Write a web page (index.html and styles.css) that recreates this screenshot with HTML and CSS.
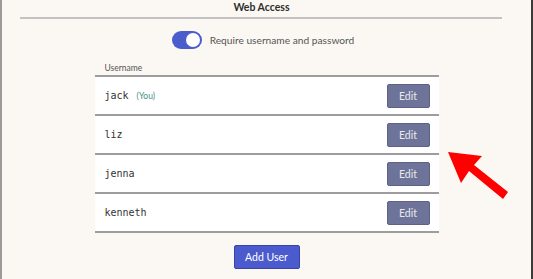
FILE: index.html
```html
<!DOCTYPE html>
<html>
<head>
    <link rel="stylesheet" href="styles.css">
</head>
<body>
    <div class="page">
        <div class="title">Web Access</div>
        <div class="rule"></div>

        <label class="require">
            <span class="toggle"><span class="knob"></span></span>
            <span class="require-text">Require username and password</span>
        </label>

        <div class="users">
            <div class="users-head">Username</div>
            <div class="user-row">
                <span class="name">jack <span class="you">(You)</span></span>
                <button class="edit">Edit</button>
            </div>
            <div class="user-row">
                <span class="name">liz</span>
                <button class="edit">Edit</button>
            </div>
            <div class="user-row">
                <span class="name">jenna</span>
                <button class="edit">Edit</button>
            </div>
            <div class="user-row">
                <span class="name">kenneth</span>
                <button class="edit">Edit</button>
            </div>
        </div>

        <button class="add-user">Add User</button>

        <svg class="arrow" width="70" height="60" viewBox="0 0 70 60">
            <polygon points="0,0 34,4 26,13 60,40 55,47 21,19 13,31" fill="#ff0000"/>
        </svg>
    </div>
</body>
</html>
```

FILE: styles.css
```css
body {
    margin: 0;
    font-family: 'Lato', 'Open Sans', sans-serif;
    background: #fbf8f3;
    overflow: hidden;
}

.page {
    position: relative;
    box-sizing: border-box;
    width: 533px;
    height: 279px;
    border-left: 2px solid #9b9b9b;
    border-right: 2px solid #3b3b3b;
    background: #fbf8f3;
    display: flex;
    flex-direction: column;
    align-items: center;
}

.title {
    margin: 1px 10px 0 0;
    font-size: 10.5px;
    font-weight: bold;
    line-height: 13px;
    color: #2e2e2e;
}

.rule {
    align-self: stretch;
    height: 2px;
    margin: 3px 29px 0 18px;
    background: #c2c2c2;
}

.require {
    display: flex;
    align-items: center;
    gap: 8px;
    margin-top: 12px;
    margin-right: 7px;
}

.toggle {
    display: flex;
    align-items: center;
    justify-content: flex-end;
    box-sizing: border-box;
    width: 30px;
    height: 18px;
    padding: 2px;
    border-radius: 9px;
    background: #4b5ccd;
}

.knob {
    width: 14px;
    height: 14px;
    border-radius: 50%;
    background: #fff;
}

.require-text {
    font-size: 10.2px;
    color: #555;
}

.users {
    width: 344px;
    margin-top: 14px;
}

.users-head {
    padding: 0 0 1px 10px;
    font-size: 8.5px;
    line-height: 11px;
    color: #555;
}

.user-row {
    display: flex;
    align-items: center;
    justify-content: space-between;
    height: 37px;
    padding: 0 9px 0 10px;
    background: #fff;
    border-top: 2px solid #9d9d9d;
}

.user-row:last-child {
    border-bottom: 2px solid #9d9d9d;
}

.name {
    font-family: 'DejaVu Sans Mono', monospace;
    font-size: 10px;
    color: #333;
}

.you {
    font-family: 'Lato', sans-serif;
    font-size: 8.5px;
    color: #3f8f80;
    margin-left: 2px;
}

.edit {
    width: 43px;
    height: 24px;
    border: 1px solid #5d6286;
    border-radius: 2px;
    background: #6e7499;
    color: #e8e9f0;
    font-family: 'Lato', sans-serif;
    font-size: 10.5px;
    padding: 0;
}

.add-user {
    width: 66px;
    height: 24px;
    margin-top: 12px;
    border: 1px solid #3545a8;
    border-radius: 2px;
    background: #4b5bcd;
    color: #fff;
    font-family: 'Lato', sans-serif;
    font-size: 10.5px;
    padding: 0;
}

.arrow {
    position: absolute;
    left: 446px;
    top: 152px;
}
```
